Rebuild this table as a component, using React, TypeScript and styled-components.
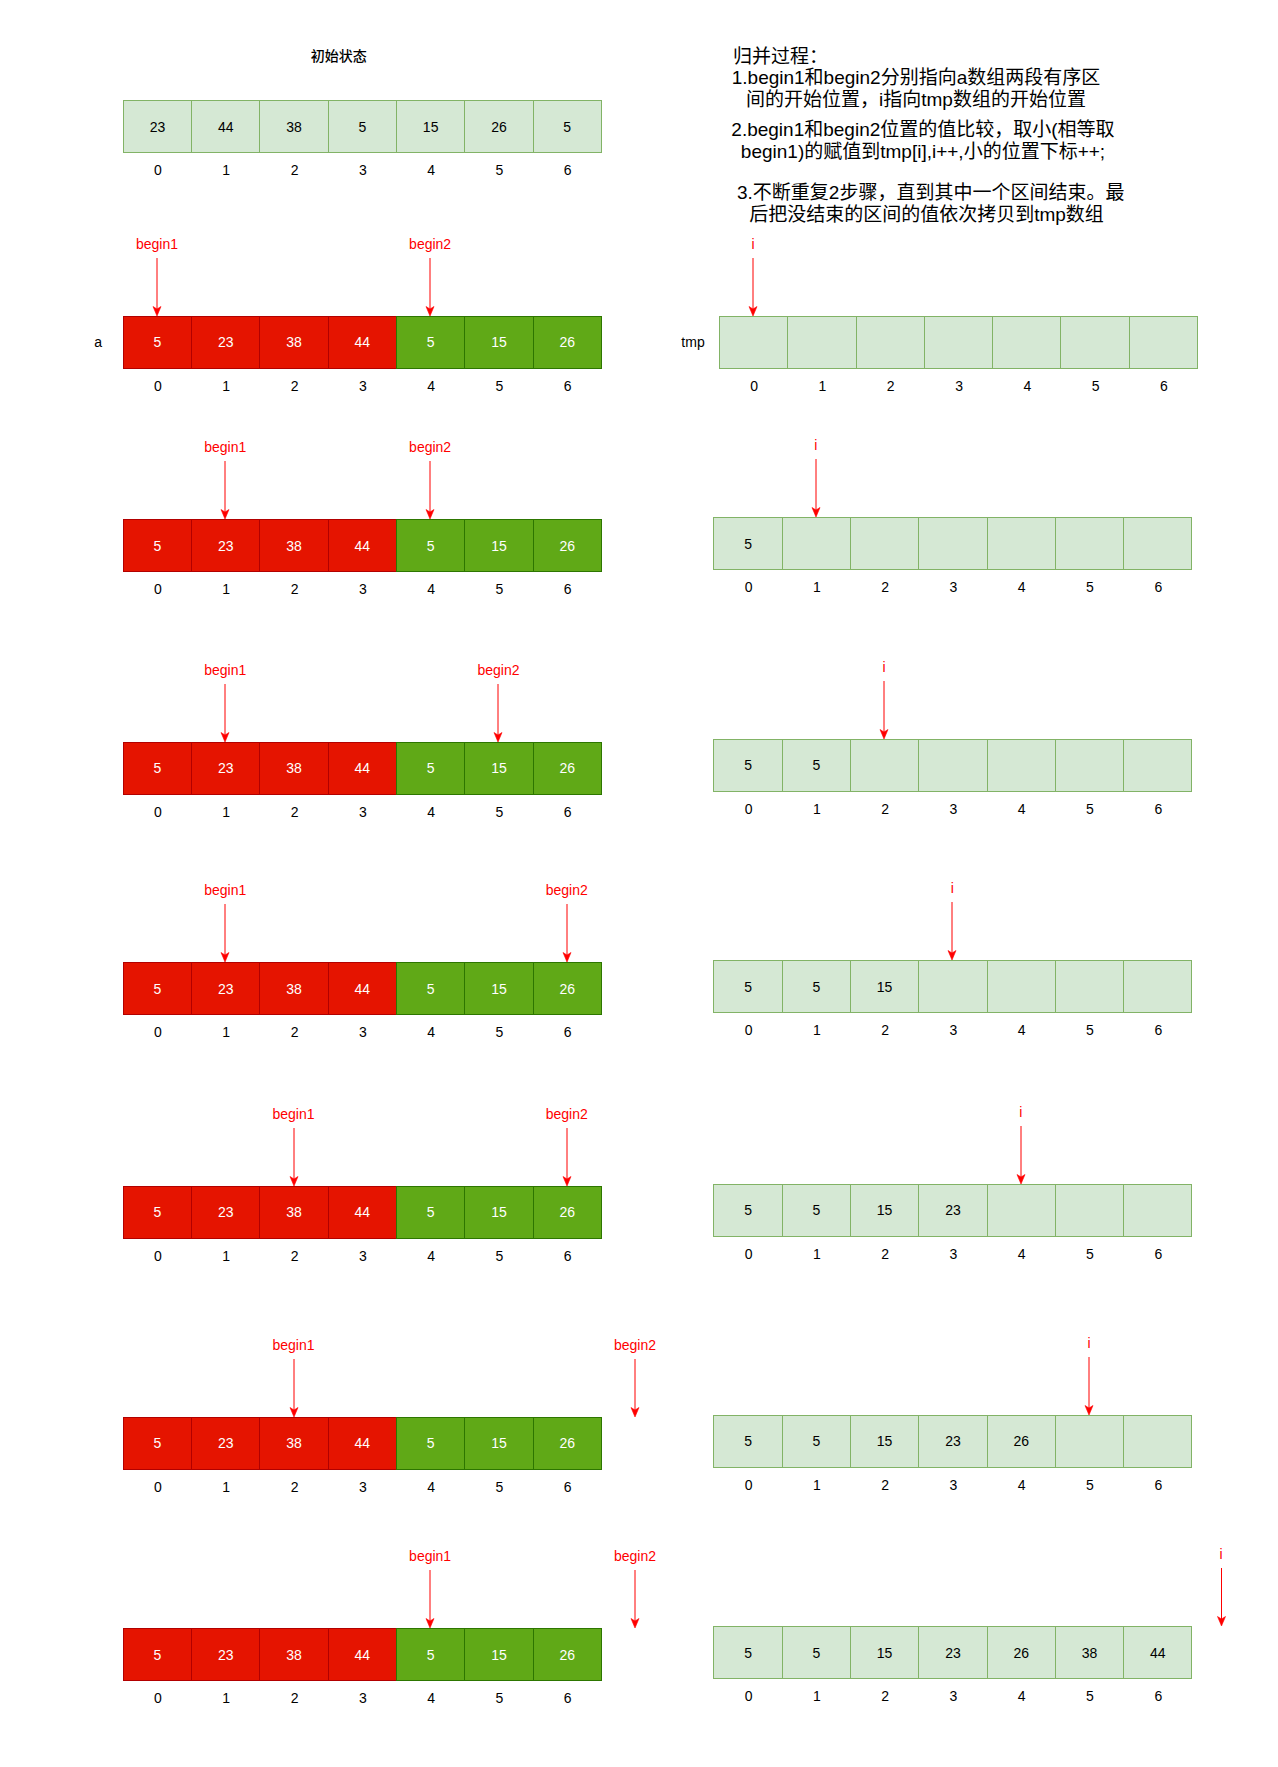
import styled, { createGlobalStyle } from "styled-components";

const CELL = 68.3;
const SANS = `"Liberation Sans", Arial, "Noto Sans CJK SC", sans-serif`;
const POINTER = "#ff0000";

const GlobalStyle = createGlobalStyle`
  html, body {
    margin: 0;
    padding: 0;
    background: #ffffff;
  }
  body {
    font-family: ${SANS};
    color: #000000;
  }
`;

type Tone = "plain" | "red" | "green";

const tones: Record<Tone, { fill: string; stroke: string; text: string }> = {
  plain: { fill: "#d5e8d4", stroke: "#82b366", text: "#000000" },
  red: { fill: "#e51400", stroke: "#b20000", text: "#ffffff" },
  green: { fill: "#60a917", stroke: "#2d7600", text: "#ffffff" },
};

interface Mark {
  col: number;
  label: string;
  dx?: number;
}

interface Step {
  gap: number;
  begin1: number;
  begin2: number;
  i: number;
  iDx?: number;
  tmp: number[];
  rightDy: number;
  rightGutter: number;
  labels?: boolean;
}

const source = [5, 23, 38, 44, 5, 15, 26];
const initial = [23, 44, 38, 5, 15, 26, 5];

const steps: Step[] = [
  { gap: 9.6, begin1: 0, begin2: 4, i: 0, tmp: [], rightDy: 0, rightGutter: 49.8, labels: true },
  { gap: 45.9, begin1: 1, begin2: 4, i: 1, tmp: [5], rightDy: -2, rightGutter: 44.2 },
  { gap: 64.1, begin1: 1, begin2: 5, i: 2, tmp: [5, 5], rightDy: -3, rightGutter: 44.2 },
  { gap: 62.9, begin1: 1, begin2: 6, i: 3, tmp: [5, 5, 15], rightDy: -2, rightGutter: 44.2 },
  { gap: 65.1, begin1: 2, begin2: 6, i: 4, tmp: [5, 5, 15, 23], rightDy: -2, rightGutter: 44.2 },
  { gap: 73, begin1: 2, begin2: 7, i: 5, tmp: [5, 5, 15, 23, 26], rightDy: -2, rightGutter: 44.2 },
  { gap: 53.9, begin1: 4, begin2: 7, i: 7, iDx: -4.5, tmp: [5, 5, 15, 23, 26, 38, 44], rightDy: -2, rightGutter: 44.2 },
];

/* ── page frame ── */

const Page = styled.div`
  width: 1278px;
  min-height: 1767px;
  display: flex;
  flex-direction: column;
  background: #ffffff;
`;

const Header = styled.div`
  display: flex;
  align-items: flex-start;
`;

const HeaderLeft = styled.div`
  width: ${CELL * 8}px;
  padding: 47px 0 0 122.8px;
  display: flex;
  flex-direction: column;
  flex-shrink: 0;
`;

const Title = styled.div`
  width: 432px;
  text-align: center;
  font-size: 14px;
  line-height: 16px;
  margin-bottom: 37px;
  font-family: "Noto Sans CJK SC", ${SANS};
  font-weight: 500;
`;

const Notes = styled.div`
  width: 400px;
  margin-left: 46.8px;
  padding-top: 46px;
  display: flex;
  flex-direction: column;
  font-size: 19px;
  color: #000000;
  white-space: nowrap;
`;

const NotesTitle = styled.div`
  padding-left: 17px;
  line-height: 21px;
`;

const Para = styled.div<{ $shift: number; $gap: number }>`
  padding-left: ${(p) => p.$shift}px;
  margin-top: ${(p) => p.$gap}px;
  text-align: center;
  line-height: 22px;
`;

/* ── step rows ── */

const StepRow = styled.div<{ $gap: number }>`
  display: flex;
  align-items: flex-start;
  margin-top: ${(p) => p.$gap}px;
`;

const Side = styled.div<{ $dy?: number }>`
  display: flex;
  margin-top: ${(p) => p.$dy ?? 0}px;
`;

const Gutter = styled.div<{ $width: number }>`
  width: ${(p) => p.$width}px;
  flex-shrink: 0;
  padding-top: 80px;
  box-sizing: border-box;
`;

const GutterLabel = styled.div<{ $pad: number }>`
  height: 53px;
  display: flex;
  align-items: center;
  justify-content: flex-end;
  padding-right: ${(p) => p.$pad}px;
  font-size: 14px;
`;

const Panel = styled.div`
  width: ${CELL * 8}px;
  display: flex;
  flex-direction: column;
  flex-shrink: 0;
`;

const PointerLane = styled.div`
  height: 80px;
  display: flex;
  align-items: flex-end;
`;

const Slot = styled.div<{ $dx?: number }>`
  width: ${CELL}px;
  flex-shrink: 0;
  display: flex;
  flex-direction: column;
  align-items: center;
  transform: translateX(${(p) => p.$dx ?? 0}px);
`;

const PointerLabel = styled.div`
  font-size: 14px;
  line-height: 16px;
  color: ${POINTER};
  margin-bottom: 6px;
  white-space: nowrap;
`;

const ArrayRow = styled.div`
  display: flex;
`;

const Cell = styled.div<{ $tone: Tone }>`
  width: ${CELL + 1}px;
  height: 53px;
  box-sizing: border-box;
  flex-shrink: 0;
  display: flex;
  align-items: center;
  justify-content: center;
  border: 1px solid ${(p) => tones[p.$tone].stroke};
  background: ${(p) => tones[p.$tone].fill};
  color: ${(p) => tones[p.$tone].text};
  font-size: 14px;

  & + & {
    margin-left: -1px;
  }
`;

const IndexRow = styled.div`
  display: flex;
  margin-top: 9px;
  padding-left: 1px;
`;

const IndexCell = styled.div`
  width: ${CELL}px;
  flex-shrink: 0;
  text-align: center;
  font-size: 14px;
  line-height: 16px;
`;

const Arrow = () => (
  <svg width="10" height="58" viewBox="0 0 10 58">
    <line x1="5" y1="0" x2="5" y2="52" stroke={POINTER} strokeWidth="1" />
    <path d="M5 58 L1 48.5 L5 51 L9 48.5 Z" fill={POINTER} stroke={POINTER} strokeWidth="0.6" />
  </svg>
);

const Lane = ({ marks }: { marks: Mark[] }) => (
  <PointerLane>
    {Array.from({ length: 8 }, (_, col) => {
      const mark = marks.find((m) => m.col === col);
      return (
        <Slot key={col} $dx={mark?.dx}>
          {mark && (
            <>
              <PointerLabel>{mark.label}</PointerLabel>
              <Arrow />
            </>
          )}
        </Slot>
      );
    })}
  </PointerLane>
);

const Indices = () => (
  <IndexRow>
    {Array.from({ length: 7 }, (_, i) => (
      <IndexCell key={i}>{i}</IndexCell>
    ))}
  </IndexRow>
);

const StepView = ({ step }: { step: Step }) => (
  <StepRow $gap={step.gap}>
    <Side>
      <Gutter $width={122.8}>{step.labels && <GutterLabel $pad={20.8}>a</GutterLabel>}</Gutter>
      <Panel>
        <Lane
          marks={[
            { col: step.begin1, label: "begin1" },
            { col: step.begin2, label: "begin2" },
          ]}
        />
        <ArrayRow>
          {source.map((v, k) => (
            <Cell key={k} $tone={k < 4 ? "red" : "green"}>
              {v}
            </Cell>
          ))}
        </ArrayRow>
        <Indices />
      </Panel>
    </Side>
    <Side $dy={step.rightDy}>
      <Gutter $width={step.rightGutter}>{step.labels && <GutterLabel $pad={14.3}>tmp</GutterLabel>}</Gutter>
      <Panel>
        <Lane marks={[{ col: step.i, label: "i", dx: step.iDx }]} />
        <ArrayRow>
          {Array.from({ length: 7 }, (_, k) => (
            <Cell key={k} $tone="plain">
              {step.tmp[k] ?? ""}
            </Cell>
          ))}
        </ArrayRow>
        <Indices />
      </Panel>
    </Side>
  </StepRow>
);

export default function App() {
  return (
    <>
      <GlobalStyle />
      <Page>
        <Header>
          <HeaderLeft>
            <Title>初始状态</Title>
            <ArrayRow>
              {initial.map((v, k) => (
                <Cell key={k} $tone="plain">
                  {v}
                </Cell>
              ))}
            </ArrayRow>
            <Indices />
          </HeaderLeft>
          <Notes>
            <NotesTitle>归并过程：</NotesTitle>
            <Para $shift={0} $gap={0}>
              1.begin1和begin2分别指向a数组两段有序区
              <br />
              间的开始位置，i指向tmp数组的开始位置
            </Para>
            <Para $shift={14} $gap={8}>
              2.begin1和begin2位置的值比较，取小(相等取
              <br />
              begin1)的赋值到tmp[i],i++,小的位置下标++;
            </Para>
            <Para $shift={21} $gap={19}>
              3.不断重复2步骤，直到其中一个区间结束。最
              <br />
              后把没结束的区间的值依次拷贝到tmp数组
            </Para>
          </Notes>
        </Header>
        {steps.map((s, k) => (
          <StepView key={k} step={s} />
        ))}
      </Page>
    </>
  );
}
